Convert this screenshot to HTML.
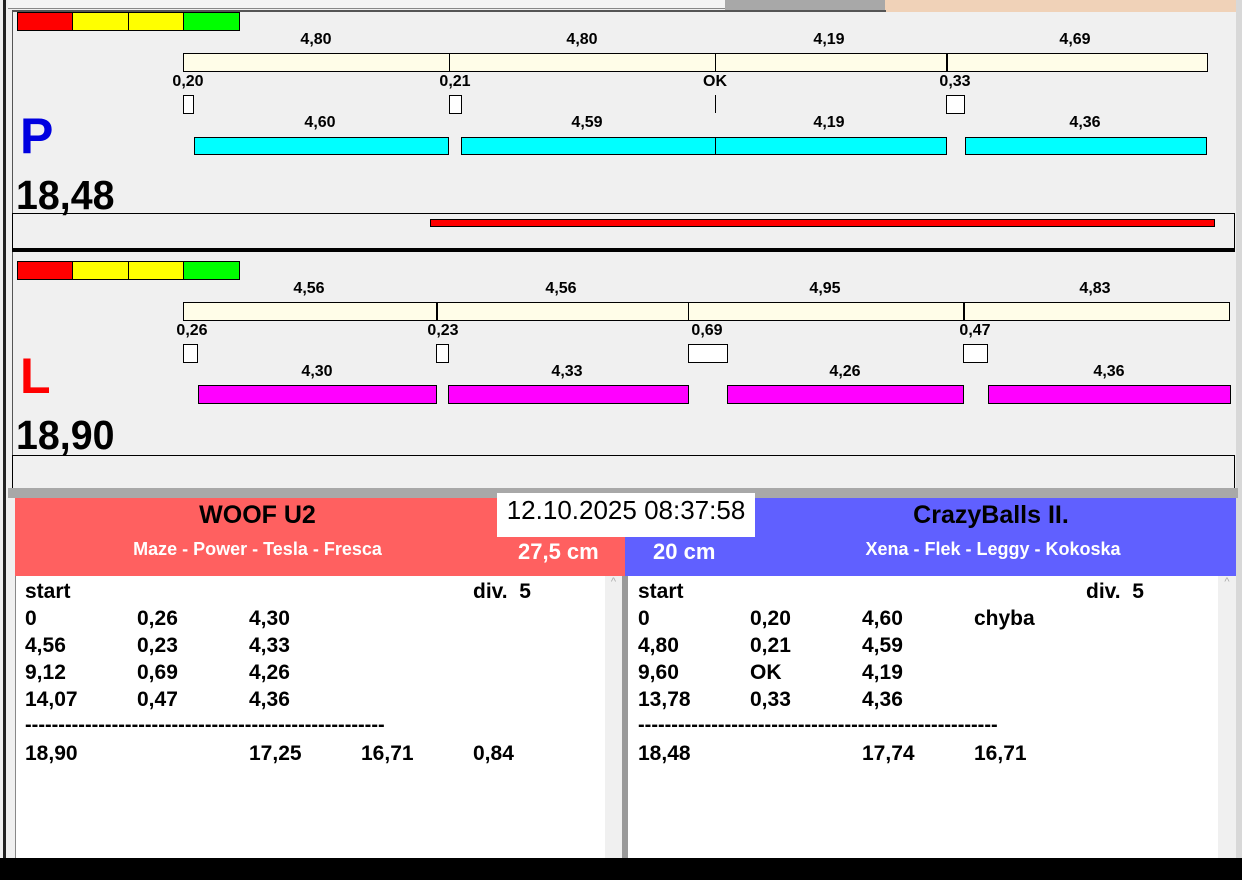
<!DOCTYPE html>
<html><head><meta charset="utf-8"><style>
*{margin:0;padding:0;box-sizing:border-box}
body{width:1242px;height:880px;background:#f0f0f0;position:relative;overflow:hidden;font-family:"Liberation Sans",Arial,sans-serif}
.a{position:absolute}
.l{position:absolute;font-weight:bold;font-size:16px;transform:translateX(-50%);white-space:nowrap;line-height:18px}
.bx{position:absolute;border:1px solid #000}
.t{position:absolute;font-weight:bold;font-size:21px;line-height:24px;white-space:nowrap}
.d{position:absolute;font-weight:bold;font-size:20px;line-height:24px;white-space:nowrap;letter-spacing:0}
</style></head><body>
<div class="a" style="left:0;top:0;width:8px;height:880px;background:#f0f0f0"></div>
<div class="a" style="left:3px;top:0;width:3px;height:860px;background:#222"></div>
<div class="a" style="left:1236px;top:0;width:6px;height:880px;background:#d8d8d8"></div>
<div class="a" style="left:8px;top:0;width:720px;height:9px;background:#f4f4f4;border-bottom:1px solid #888"></div>
<div class="a" style="left:725px;top:0;width:160px;height:10px;background:#a8a8a8"></div>
<div class="a" style="left:885px;top:0;width:351px;height:12px;background:#f0d2b8"></div>
<div class="a" style="left:12px;top:10px;width:874px;height:2px;background:#555"></div>

<div class="a" style="left:12px;top:10px;width:1px;height:240px;background:#555"></div>
<div class="bx" style="left:17px;top:12px;width:56px;height:19px;background:#f00"></div>
<div class="bx" style="left:72px;top:12px;width:57px;height:19px;background:#ff0"></div>
<div class="bx" style="left:128px;top:12px;width:56px;height:19px;background:#ff0"></div>
<div class="bx" style="left:183px;top:12px;width:57px;height:19px;background:#0f0"></div>

<div class="l" style="left:316px;top:31px">4,80</div>
<div class="l" style="left:582px;top:31px">4,80</div>
<div class="l" style="left:829px;top:31px">4,19</div>
<div class="l" style="left:1075px;top:31px">4,69</div>
<div class="bx" style="left:183px;top:53px;width:1025px;height:19px;background:#fffde8"></div>
<div class="a" style="left:449px;top:53px;width:1px;height:19px;background:#000"></div>
<div class="a" style="left:715px;top:53px;width:1px;height:19px;background:#000"></div>
<div class="a" style="left:946px;top:53px;width:2px;height:19px;background:#000"></div>
<div class="l" style="left:188px;top:73px">0,20</div>
<div class="l" style="left:455px;top:73px">0,21</div>
<div class="l" style="left:715px;top:73px">OK</div>
<div class="l" style="left:955px;top:73px">0,33</div>
<div class="bx" style="left:183px;top:95px;width:11px;height:19px;background:#fff"></div>
<div class="bx" style="left:449px;top:95px;width:13px;height:19px;background:#fff"></div>
<div class="a" style="left:715px;top:95px;width:1px;height:18px;background:#000"></div>
<div class="bx" style="left:946px;top:95px;width:19px;height:19px;background:#fff"></div>
<div class="a" style="left:20px;top:108px;font-size:50px;font-weight:bold;color:#0000e0;line-height:56px">P</div>
<div class="l" style="left:320px;top:114px">4,60</div>
<div class="l" style="left:587px;top:114px">4,59</div>
<div class="l" style="left:829px;top:114px">4,19</div>
<div class="l" style="left:1085px;top:114px">4,36</div>
<div class="bx" style="left:194px;top:137px;width:255px;height:18px;background:#0ff"></div>
<div class="bx" style="left:461px;top:137px;width:486px;height:18px;background:#0ff"></div>
<div class="a" style="left:715px;top:137px;width:1px;height:18px;background:#000"></div>
<div class="bx" style="left:965px;top:137px;width:242px;height:18px;background:#0ff"></div>
<div class="a" style="left:16px;top:172px;font-size:41px;font-weight:bold;line-height:46px;transform:scaleX(.96);transform-origin:left">18,48</div>
<div class="a" style="left:12px;top:213px;width:1223px;height:36px;border:1px solid #000;border-bottom:none"></div>
<div class="bx" style="left:430px;top:219px;width:785px;height:8px;background:#f00"></div>
<div class="a" style="left:12px;top:248px;width:1223px;height:4px;background:#000"></div>

<div class="a" style="left:12px;top:252px;width:1px;height:236px;background:#555"></div>
<div class="bx" style="left:17px;top:261px;width:56px;height:19px;background:#f00"></div>
<div class="bx" style="left:72px;top:261px;width:57px;height:19px;background:#ff0"></div>
<div class="bx" style="left:128px;top:261px;width:56px;height:19px;background:#ff0"></div>
<div class="bx" style="left:183px;top:261px;width:57px;height:19px;background:#0f0"></div>
<div class="l" style="left:309px;top:280px">4,56</div>
<div class="l" style="left:561px;top:280px">4,56</div>
<div class="l" style="left:825px;top:280px">4,95</div>
<div class="l" style="left:1095px;top:280px">4,83</div>
<div class="bx" style="left:183px;top:302px;width:1047px;height:19px;background:#fffde8"></div>
<div class="a" style="left:436px;top:302px;width:2px;height:19px;background:#000"></div>
<div class="a" style="left:688px;top:302px;width:1px;height:19px;background:#000"></div>
<div class="a" style="left:963px;top:302px;width:2px;height:19px;background:#000"></div>
<div class="l" style="left:192px;top:322px">0,26</div>
<div class="l" style="left:443px;top:322px">0,23</div>
<div class="l" style="left:707px;top:322px">0,69</div>
<div class="l" style="left:975px;top:322px">0,47</div>
<div class="bx" style="left:183px;top:344px;width:15px;height:19px;background:#fff"></div>
<div class="bx" style="left:436px;top:344px;width:13px;height:19px;background:#fff"></div>
<div class="bx" style="left:688px;top:344px;width:40px;height:19px;background:#fff"></div>
<div class="bx" style="left:963px;top:344px;width:25px;height:19px;background:#fff"></div>
<div class="a" style="left:20px;top:348px;font-size:50px;font-weight:bold;color:#f00;line-height:56px">L</div>
<div class="l" style="left:317px;top:363px">4,30</div>
<div class="l" style="left:567px;top:363px">4,33</div>
<div class="l" style="left:845px;top:363px">4,26</div>
<div class="l" style="left:1109px;top:363px">4,36</div>
<div class="bx" style="left:198px;top:385px;width:239px;height:19px;background:#f0f"></div>
<div class="bx" style="left:448px;top:385px;width:241px;height:19px;background:#f0f"></div>
<div class="bx" style="left:727px;top:385px;width:237px;height:19px;background:#f0f"></div>
<div class="bx" style="left:988px;top:385px;width:243px;height:19px;background:#f0f"></div>
<div class="a" style="left:16px;top:412px;font-size:41px;font-weight:bold;line-height:46px;transform:scaleX(.96);transform-origin:left">18,90</div>
<div class="a" style="left:12px;top:455px;width:1223px;height:34px;border:1px solid #000;border-bottom:none"></div>
<div class="a" style="left:8px;top:488px;width:1230px;height:10px;background:#a8a8a8"></div>

<div class="a" style="left:15px;top:498px;width:610px;height:78px;background:#ff6060"></div>
<div class="a" style="left:625px;top:498px;width:611px;height:78px;background:#6060ff"></div>
<div class="a" style="left:15px;top:500px;width:485px;text-align:center;font-size:25px;font-weight:bold;line-height:30px">WOOF U2</div>
<div class="a" style="left:15px;top:538px;width:485px;text-align:center;font-size:18px;font-weight:bold;color:#fff;line-height:22px">Maze - Power - Tesla - Fresca</div>
<div class="a" style="left:518px;top:539px;font-size:22px;font-weight:bold;color:#fff;line-height:26px">27,5 cm</div>
<div class="a" style="left:653px;top:539px;font-size:22px;font-weight:bold;color:#fff;line-height:26px">20 cm</div>
<div class="a" style="left:750px;top:500px;width:482px;text-align:center;font-size:25px;font-weight:bold;line-height:30px">CrazyBalls II.</div>
<div class="a" style="left:750px;top:538px;width:486px;text-align:center;font-size:18px;font-weight:bold;color:#fff;line-height:22px">Xena - Flek - Leggy - Kokoska</div>
<div class="a" style="left:497px;top:493px;width:258px;height:44px;background:#fff;font-size:26px;line-height:34px;text-align:center">12.10.2025 08:37:58</div>

<div class="a" style="left:15px;top:576px;width:590px;height:284px;background:#fff;border-left:1px solid #888"></div>
<div class="a" style="left:605px;top:576px;width:17px;height:284px;background:#f0f0f0;color:#aaa;font-size:11px;text-align:center">^</div>
<div class="a" style="left:622px;top:576px;width:6px;height:284px;background:#9a9a9a"></div>
<div class="a" style="left:628px;top:576px;width:590px;height:284px;background:#fff"></div>
<div class="a" style="left:1218px;top:576px;width:18px;height:284px;background:#f0f0f0;color:#aaa;font-size:11px;text-align:center">^</div>

<div class="t" style="left:25px;top:580px">start</div><div class="t" style="left:473px;top:580px">div.&nbsp; 5</div>
<div class="t" style="left:25px;top:607px">0</div><div class="t" style="left:137px;top:607px">0,26</div><div class="t" style="left:249px;top:607px">4,30</div>
<div class="t" style="left:25px;top:634px">4,56</div><div class="t" style="left:137px;top:634px">0,23</div><div class="t" style="left:249px;top:634px">4,33</div>
<div class="t" style="left:25px;top:661px">9,12</div><div class="t" style="left:137px;top:661px">0,69</div><div class="t" style="left:249px;top:661px">4,26</div>
<div class="t" style="left:25px;top:688px">14,07</div><div class="t" style="left:137px;top:688px">0,47</div><div class="t" style="left:249px;top:688px">4,36</div>
<div class="d" style="left:25px;top:713px">------------------------------------------------------</div>
<div class="t" style="left:25px;top:742px">18,90</div><div class="t" style="left:249px;top:742px">17,25</div><div class="t" style="left:361px;top:742px">16,71</div><div class="t" style="left:473px;top:742px">0,84</div>

<div class="t" style="left:638px;top:580px">start</div><div class="t" style="left:1086px;top:580px">div.&nbsp; 5</div>
<div class="t" style="left:638px;top:607px">0</div><div class="t" style="left:750px;top:607px">0,20</div><div class="t" style="left:862px;top:607px">4,60</div><div class="t" style="left:974px;top:607px">chyba</div>
<div class="t" style="left:638px;top:634px">4,80</div><div class="t" style="left:750px;top:634px">0,21</div><div class="t" style="left:862px;top:634px">4,59</div>
<div class="t" style="left:638px;top:661px">9,60</div><div class="t" style="left:750px;top:661px">OK</div><div class="t" style="left:862px;top:661px">4,19</div>
<div class="t" style="left:638px;top:688px">13,78</div><div class="t" style="left:750px;top:688px">0,33</div><div class="t" style="left:862px;top:688px">4,36</div>
<div class="d" style="left:638px;top:713px">------------------------------------------------------</div>
<div class="t" style="left:638px;top:742px">18,48</div><div class="t" style="left:862px;top:742px">17,74</div><div class="t" style="left:974px;top:742px">16,71</div>

<div class="a" style="left:0;top:858px;width:1242px;height:22px;background:#000"></div>
</body></html>
